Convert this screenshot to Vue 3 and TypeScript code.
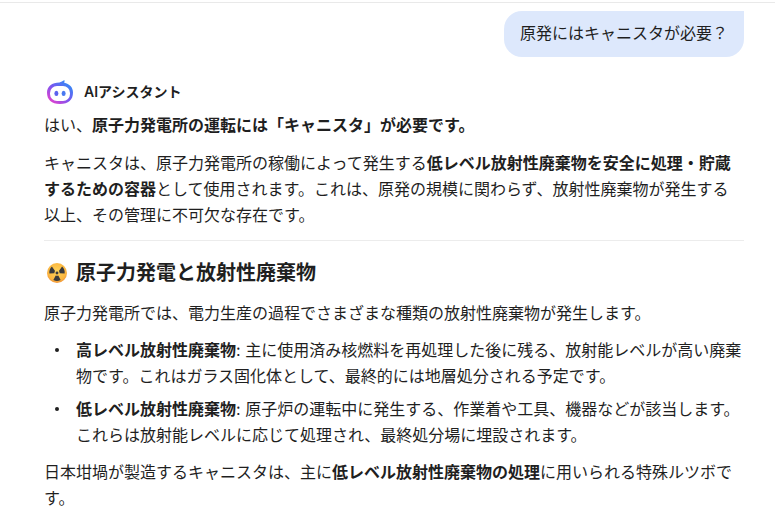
<template>
  <div class="chat">
    <div class="user-row">
      <div class="bubble">原発にはキャニスタが必要？</div>
    </div>

    <div class="answer">
      <div class="answer-head">
        <svg class="bot-icon" width="28" height="28" viewBox="0 0 28 28">
          <defs>
            <linearGradient id="botGrad" x1="0.1" y1="0.95" x2="0.85" y2="0.1">
              <stop offset="0" stop-color="#ea3fcc" />
              <stop offset="0.5" stop-color="#7a55f0" />
              <stop offset="1" stop-color="#2f8cf5" />
            </linearGradient>
          </defs>
          <path d="M13.5 4.4 C15 4 16.8 3 18.4 2 C18.6 3 18.6 3.8 18.2 4.8 C23.4 5.9 27 9.2 27 14.6 C27 22 22.5 26 14 26 C5.5 26 1 22 1 14.6 C1 8.4 6 4.4 13.5 4.4 Z" fill="url(#botGrad)" />
          <rect x="4" y="8" width="20" height="15" rx="7" fill="#fff" />
          <ellipse cx="10.4" cy="15.4" rx="2" ry="2.6" fill="#5b62ee" />
          <ellipse cx="17.6" cy="15.4" rx="2" ry="2.6" fill="#4a79f0" />
        </svg>
        <span class="bot-name">AIアシスタント</span>
      </div>

      <p>はい、<strong>原子力発電所の運転には「キャニスタ」が必要です。</strong></p>
      <p>
        キャニスタは、原子力発電所の稼働によって発生する<strong>低レベル放射性廃棄物を安全に処理・貯蔵するための容器</strong>として使用されます。これは、原発の規模に関わらず、放射性廃棄物が発生する以上、その管理に不可欠な存在です。
      </p>

      <hr />

      <h3>
        <svg class="emoji" width="20" height="20" viewBox="0 0 22 22">
          <defs>
            <radialGradient id="radGrad" cx="0.5" cy="0.42" r="0.6">
              <stop offset="0" stop-color="#ffd45a" />
              <stop offset="0.75" stop-color="#fbb63f" />
              <stop offset="1" stop-color="#ee8f3a" />
            </radialGradient>
          </defs>
          <circle cx="11" cy="11" r="11" fill="url(#radGrad)" />
          <g fill="#3a3a3c">
            <circle cx="11" cy="11" r="1.6" />
            <path d="M8.9 8.9 L5.4 3.9 A9 9 0 0 0 2.6 11.6 L8.2 11.4 A3 3 0 0 1 8.9 8.9 Z" />
            <path d="M13.1 8.9 L16.6 3.9 A9 9 0 0 1 19.4 11.6 L13.8 11.4 A3 3 0 0 0 13.1 8.9 Z" />
            <path d="M9.6 13.7 L7 18.7 A9 9 0 0 0 15 18.7 L12.4 13.7 A3 3 0 0 1 9.6 13.7 Z" />
          </g>
        </svg>
        原子力発電と放射性廃棄物
      </h3>

      <p class="lead">原子力発電所では、電力生産の過程でさまざまな種類の放射性廃棄物が発生します。</p>

      <ul>
        <li v-for="item in wasteItems" :key="item.label">
          <strong>{{ item.label }}</strong>: {{ item.text }}
        </li>
      </ul>

      <p>
        日本坩堝が製造するキャニスタは、主に<strong>低レベル放射性廃棄物の処理</strong>に用いられる特殊ルツボです。
      </p>
    </div>
  </div>
</template>

<script setup lang="ts">
const wasteItems = [
  {
    label: '高レベル放射性廃棄物',
    text: '主に使用済み核燃料を再処理した後に残る、放射能レベルが高い廃棄物です。これはガラス固化体として、最終的には地層処分される予定です。',
  },
  {
    label: '低レベル放射性廃棄物',
    text: '原子炉の運転中に発生する、作業着や工具、機器などが該当します。これらは放射能レベルに応じて処理され、最終処分場に埋設されます。',
  },
]
</script>

<style>
html,
body {
  margin: 0;
  background: #fff;
  overflow: hidden;
}
</style>

<style scoped>
.chat {
  width: 775px;
  height: 517px;
  overflow: hidden;
  box-sizing: border-box;
  margin-top: 2px;
  border-top: 1px solid #e9e9e9;
  padding: 8px 31px 0 44px;
  font-family: "Inter", "Noto Sans CJK JP", sans-serif;
  font-size: 16px;
  line-height: 26px;
  color: #1f1f1f;
}

.user-row {
  display: flex;
  justify-content: flex-end;
}

.bubble {
  background: #dde8fc;
  border-radius: 18px 0 18px 18px;
  padding: 9px 16px 11px;
  color: #1f1f1f;
}

.answer {
  margin-top: 19px;
}

.answer-head {
  display: flex;
  align-items: center;
  gap: 10px;
  box-sizing: border-box;
  height: 36px;
  padding-bottom: 4px;
  margin-left: 2px;
}

.bot-name {
  font-size: 14px;
  font-weight: 600;
  color: #1f1f1f;
}

p {
  margin: 0 0 12px;
}

p.lead {
  margin-bottom: 11px;
}

strong {
  font-weight: 700;
}

hr {
  border: 0;
  border-top: 1px solid #ececec;
  margin: 0;
}

h3 {
  display: flex;
  align-items: center;
  gap: 9px;
  margin: 16px 0 11px;
  font-size: 20px;
  line-height: 32px;
  font-weight: 700;
  color: #1f1f1f;
}

.emoji {
  margin-left: 3px;
}

ul {
  list-style: none;
  margin: 0 0 11px;
  padding: 0 0 0 32px;
}

li {
  position: relative;
  margin-bottom: 7px;
}

li::before {
  content: "";
  position: absolute;
  left: -21px;
  top: 11px;
  width: 4px;
  height: 4px;
  border-radius: 50%;
  background: #1f1f1f;
}
</style>
